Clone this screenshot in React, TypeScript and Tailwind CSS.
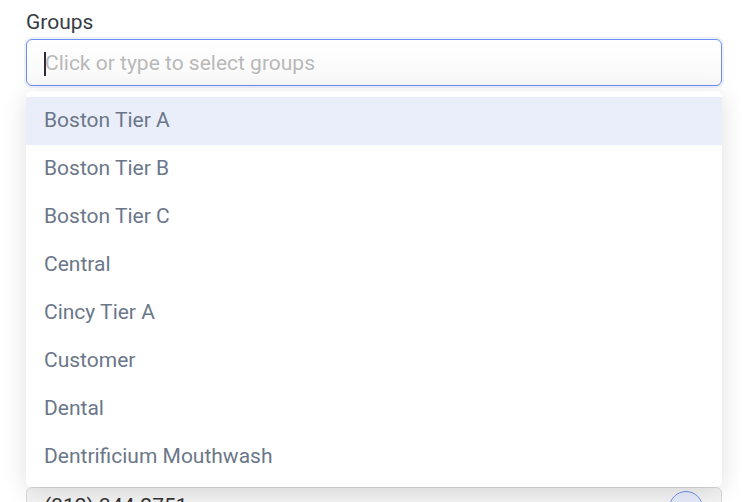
import React from "react";

const items = [
  "Boston Tier A",
  "Boston Tier B",
  "Boston Tier C",
  "Central",
  "Cincy Tier A",
  "Customer",
  "Dental",
  "Dentrificium Mouthwash",
];

export default function App() {
  return (
    <div
      className="relative w-[742px] h-[502px] overflow-hidden bg-white"
      style={{ fontFamily: "Roboto, 'Liberation Sans', sans-serif" }}
    >
      <div className="pl-[26px] pr-[20px] pt-[8px]">
        <div className="text-[21px] leading-[28px] text-[#353b45]">Groups</div>
        <div className="relative mt-[3px] h-[47px] rounded-[6px] border border-[#6f8ff0] bg-gradient-to-b from-white to-[#f9f9f9] shadow-[0_0_0_2px_rgba(111,143,240,0.12)] flex items-center pl-[17px] pt-[2px]">
          <span className="w-[2px] h-[24px] bg-[#2a2a3a]" />
          <span className="text-[21px] text-[#b9b9b9] -ml-[1px]">Click or type to select groups</span>
        </div>
        <div className="h-[401px]" />
        <div className="border border-[#d9d9d9] rounded-[6px] bg-[#f3f3f3] h-[60px] flex items-start justify-between pl-[17px] pr-[18px] pt-[3px]">
          <span className="text-[21px] text-[#333]">(312) 344-2751</span>
          <span className="w-[34px] h-[34px] rounded-full border border-[#6f8ff0] bg-[#e6ebfa] flex items-center justify-center text-[#4a63c9] text-[18px]">1</span>
        </div>
      </div>
      <div className="absolute left-[26px] top-[91px] w-[696px] rounded-[6px] bg-white py-[6px] shadow-[0_4px_24px_rgba(0,0,0,0.13)]">
        {items.map((it, i) => (
          <div
            key={it}
            className={
              "h-[48px] flex items-center pl-[18px] text-[21px] text-[#6b7789] " +
              (i === 0 ? "bg-[#eaeefa]" : "")
            }
          >
            {it}
          </div>
        ))}
      </div>
    </div>
  );
}
